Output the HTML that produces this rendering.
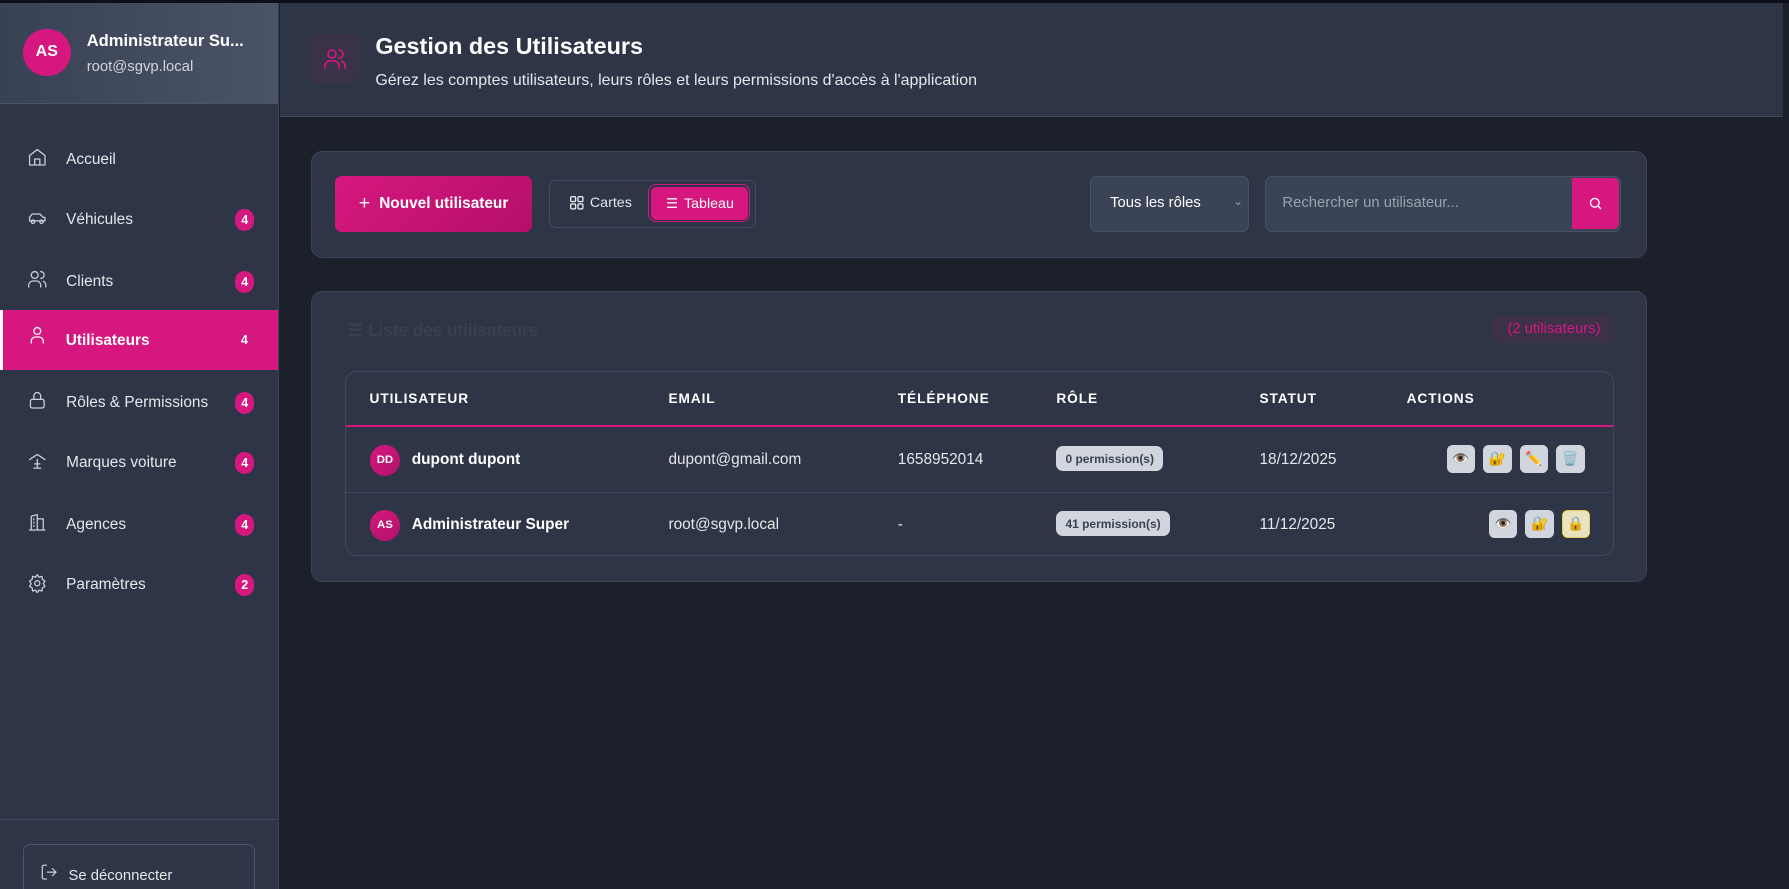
<!DOCTYPE html>
<html><head><meta charset="utf-8"><style>
html,body{margin:0;padding:0;width:1789px;height:889px;overflow:hidden;background:#1b202b}
#w{zoom:1.14094;width:1568px;height:780px;position:relative;font-family:"Liberation Sans",sans-serif;color:#e5e7eb}
.a{position:absolute}
.side{left:0;top:3px;width:244px;height:777px;background:#2d3546;border-right:1px solid #3a4356}
.shead{left:0;top:0;width:244px;height:87px;background:linear-gradient(90deg,#394254,#4a5467);border-bottom:1px solid #4b5468}
.av{border-radius:50%;background:#d6177f;color:#fff;font-weight:bold;display:flex;align-items:center;justify-content:center}
.nav{left:0;width:244px;height:52px;display:flex;align-items:center;font-size:13.5px;color:#e5e7eb}
.nav svg{position:absolute;left:24px;top:15px;width:18px;height:18px;fill:none;stroke:#cbd0d8;stroke-width:1.5;stroke-linecap:round;stroke-linejoin:round}
.nav span.t{position:absolute;left:58px}
.bd{position:absolute;left:206px;width:17px;height:19px;border-radius:9px;background:#d6177f;color:#fff;font-size:11px;font-weight:bold;display:flex;align-items:center;justify-content:center}
.card{background:#2d3546;border:1px solid #3c4558;border-radius:10px}
.th{font-size:12px;font-weight:bold;letter-spacing:.8px;color:#fff}
.td{font-size:13.5px;color:#e5e7eb}
.pill{background:#d1d6de;color:#3b4252;font-size:10.5px;font-weight:bold;border-radius:6px;padding:5px 8px}
.ab{width:25px;height:25px;border-radius:5px;background:#d1d6de;display:flex;align-items:center;justify-content:center;font-size:12px}
</style></head><body><div id="w">
<div class="a" style="left:0;top:0;width:1568px;height:3px;background:#0e1019"></div>
<div class="a side">
 <div class="a shead"></div>
 <div class="a av" style="left:20px;top:22px;width:42px;height:42px;font-size:14px">AS</div>
 <div class="a" style="left:76px;top:24px;font-size:14.5px;font-weight:bold;color:#fff">Administrateur Su...</div>
 <div class="a" style="left:76px;top:49px;font-size:13px;color:#d0d4db">root@sgvp.local</div>
 <div class="a nav" style="top:111px"><svg viewBox="0 0 24 24"><path d="M3 10l9-7 9 7v11H3z M9 21v-7h6v7"/></svg><span class="t">Accueil</span></div>
 <div class="a nav" style="top:164px"><svg viewBox="0 0 24 24"><path d="M3 15v-4l3-4h9l4 4h2v4z"/><circle cx="7" cy="16" r="2"/><circle cx="17" cy="16" r="2"/></svg><span class="t">Véhicules</span><span class="bd">4</span></div>
 <div class="a nav" style="top:218px"><svg viewBox="0 0 24 24"><circle cx="9" cy="7" r="4"/><path d="M2 21v-2a5 5 0 0 1 5-5h4a5 5 0 0 1 5 5v2M16 3a4 4 0 0 1 0 8M22 21v-2a5 5 0 0 0-3-4.6"/></svg><span class="t">Clients</span><span class="bd">4</span></div>
 <div class="a nav" style="top:269px;height:52px;background:#d6177f;border-left:3px solid #fff;width:241px;color:#fff;font-weight:bold"><svg viewBox="0 0 24 24" style="stroke:#fff;left:21px;top:13px"><circle cx="12" cy="7" r="4"/><path d="M5 21v-2a5 5 0 0 1 5-5h4a5 5 0 0 1 5 5v2"/></svg><span class="t" style="left:55px;top:19px">Utilisateurs</span><span class="bd" style="background:none;left:203px">4</span></div>
 <div class="a nav" style="top:324px"><svg viewBox="0 0 24 24"><rect x="4" y="11" width="16" height="10" rx="2"/><path d="M8 11V7a4 4 0 0 1 8 0v4"/></svg><span class="t">Rôles &amp; Permissions</span><span class="bd">4</span></div>
 <div class="a nav" style="top:377px"><svg viewBox="0 0 24 24"><path d="M3 10l9-6 9 6M12 10v10M8 20h8M9 15h6M12 13v4"/></svg><span class="t">Marques voiture</span><span class="bd">4</span></div>
 <div class="a nav" style="top:431px"><svg viewBox="0 0 24 24"><path d="M3 21h18M5 21V5l7-2v18M12 8h7v13M8 8v1M8 12v1M8 16v1"/></svg><span class="t">Agences</span><span class="bd">4</span></div>
 <div class="a nav" style="top:484px"><svg viewBox="0 0 24 24"><circle cx="12" cy="12" r="3"/><path d="M12 2l2 3 3.5-1 .5 3.5 3 2-2 3 2 3-3 2-.5 3.5-3.5-1-2 3-2-3-3.5 1-.5-3.5-3-2 2-3-2-3 3-2 .5-3.5 3.5 1z"/></svg><span class="t">Paramètres</span><span class="bd">2</span></div>
 <div class="a" style="left:0;top:715px;width:244px;height:1px;background:#414a5d"></div>
 <div class="a" style="left:20px;top:737px;width:202px;height:50px;border:1px solid #4b5468;border-radius:6px"></div>
 <svg class="a" style="left:35px;top:753px" width="16" height="16" viewBox="0 0 24 24" fill="none" stroke="#cbd0d8" stroke-width="1.6"><path d="M9 21H5a2 2 0 0 1-2-2V5a2 2 0 0 1 2-2h4M16 17l5-5-5-5M21 12H9"/></svg>
 <div class="a" style="left:60px;top:758px;font-size:13px">Se déconnecter</div>
</div>
<div class="a" style="left:245px;top:3px;width:1318px;height:99px;background:#2d3546;border-bottom:1px solid #434c5f"></div>
<div class="a" style="left:272px;top:30px;width:43px;height:43px;border-radius:7px;background:#3b3249"></div>
<svg class="a" style="left:283px;top:41px" width="21" height="21" viewBox="0 0 24 24" fill="none" stroke="#d6177f" stroke-width="1.6" stroke-linecap="round"><circle cx="9" cy="7" r="4"/><path d="M2 21v-2a5 5 0 0 1 5-5h4a5 5 0 0 1 5 5v2M16 3a4 4 0 0 1 0 8M22 21v-2a5 5 0 0 0-3-4.6"/></svg>
<div class="a" style="left:329px;top:29px;font-size:20.5px;font-weight:bold;color:#fff">Gestion des Utilisateurs</div>
<div class="a" style="left:329px;top:63px;font-size:14px;color:#e5e7eb">Gérez les comptes utilisateurs, leurs rôles et leurs permissions d'accès à l'application</div>
<div class="a" style="left:1563px;top:3px;width:5px;height:777px;background:#1b202b"></div>

<div class="a card" style="left:273px;top:132px;width:1169px;height:92px"></div>
<div class="a" style="left:294px;top:154px;width:172px;height:49px;border-radius:6px;background:linear-gradient(135deg,#d6177f,#b5106a);display:flex;align-items:center;justify-content:center;font-size:13.5px;font-weight:bold;color:#fff"><span style="font-size:17px;font-weight:normal;margin-right:8px">+</span>Nouvel utilisateur</div>
<div class="a" style="left:481px;top:158px;width:180px;height:40px;border:1px solid #434c5f;border-radius:6px"></div>
<div class="a" style="left:500px;top:171px;font-size:12.5px;display:flex;align-items:center;gap:5px"><svg width="12" height="12" viewBox="0 0 12 12" fill="none" stroke="#e5e7eb" stroke-width="1.2"><rect x=".6" y=".6" width="4.3" height="4.3" rx="1"/><rect x="7" y=".6" width="4.3" height="4.3" rx="1"/><rect x=".6" y="7" width="4.3" height="4.3" rx="1"/><rect x="7" y="7" width="4.3" height="4.3" rx="1"/></svg>Cartes</div>
<div class="a" style="left:568px;top:161px;width:88px;height:32px;border:1.5px solid #d6177f;border-radius:7px"></div>
<div class="a" style="left:571px;top:164px;width:85px;height:29px;background:#d6177f;border-radius:5px;display:flex;align-items:center;justify-content:center;font-size:12.5px;color:#fff;gap:5px"><span style="font-size:12px">☰</span>Tableau</div>
<div class="a" style="left:955px;top:154px;width:138px;height:48px;background:#3a4456;border:1px solid #485165;border-radius:6px"></div>
<div class="a" style="left:973px;top:171px;font-size:13px;color:#fff">Tous les rôles</div>
<div class="a" style="left:1081px;top:170px;font-size:10px;color:#9aa2b0">⌄</div>
<div class="a" style="left:1109px;top:154px;width:310px;height:48px;background:#3a4456;border:1px solid #485165;border-radius:6px"></div>
<div class="a" style="left:1124px;top:171px;font-size:13px;color:#9aa2b0">Rechercher un utilisateur...</div>
<div class="a" style="left:1378px;top:156px;width:41px;height:45px;background:#d6177f;border-radius:0 5px 5px 0;display:flex;align-items:center;justify-content:center"><svg width="13" height="13" viewBox="0 0 24 24" fill="none" stroke="#fff" stroke-width="2.2"><circle cx="11" cy="11" r="7"/><path d="M16 16l5 5"/></svg></div>

<div class="a card" style="left:273px;top:255px;width:1169px;height:253px"></div>
<div class="a" style="left:305px;top:281px;font-size:15px;font-weight:bold;color:#38414f">☰ Liste des utilisateurs</div>
<div class="a" style="left:1309px;top:276px;width:106px;height:25px;border-radius:6px;background:#3d3049;color:#d6177f;font-size:13px;display:flex;align-items:center;justify-content:center">(2 utilisateurs)</div>
<div class="a" style="left:302px;top:325px;width:1111px;height:161px;border:1px solid #414a5d;border-radius:10px;overflow:hidden">
 <div class="a" style="left:0;top:47px;width:1111px;height:1px;background:#d6177f"></div>
 <div class="a" style="left:0;top:105px;width:1111px;height:1px;background:#3c4558"></div>
 <div class="a th" style="left:21px;top:17px">UTILISATEUR</div>
 <div class="a th" style="left:283px;top:17px">EMAIL</div>
 <div class="a th" style="left:484px;top:17px">TÉLÉPHONE</div>
 <div class="a th" style="left:623px;top:17px">RÔLE</div>
 <div class="a th" style="left:801px;top:17px">STATUT</div>
 <div class="a th" style="left:930px;top:17px">ACTIONS</div>

 <div class="a av" style="left:21px;top:64px;width:27px;height:27px;font-size:10px;background:linear-gradient(135deg,#d6177f,#b0126a)">DD</div>
 <div class="a td" style="left:58px;top:69px;font-weight:bold;color:#fff">dupont dupont</div>
 <div class="a td" style="left:283px;top:69px">dupont@gmail.com</div>
 <div class="a td" style="left:484px;top:69px">1658952014</div>
 <div class="a pill" style="left:623px;top:65px">0 permission(s)</div>
 <div class="a td" style="left:801px;top:69px">18/12/2025</div>
 <div class="a" style="left:965px;top:64px;display:flex;gap:7px"><div class="ab">👁️</div><div class="ab">🔐</div><div class="ab">✏️</div><div class="ab">🗑️</div></div>

 <div class="a av" style="left:21px;top:121px;width:27px;height:27px;font-size:10px;background:linear-gradient(135deg,#d6177f,#b0126a)">AS</div>
 <div class="a td" style="left:58px;top:126px;font-weight:bold;color:#fff">Administrateur Super</div>
 <div class="a td" style="left:283px;top:126px">root@sgvp.local</div>
 <div class="a td" style="left:484px;top:126px">-</div>
 <div class="a pill" style="left:623px;top:122px">41 permission(s)</div>
 <div class="a td" style="left:801px;top:126px">11/12/2025</div>
 <div class="a" style="left:1002px;top:121px;display:flex;gap:7px"><div class="ab">👁️</div><div class="ab">🔐</div><div class="ab" style="background:#ebe2bf;border:1px solid #e6c760;width:23px;height:23px">🔒</div></div>
</div>
</div></body></html>
